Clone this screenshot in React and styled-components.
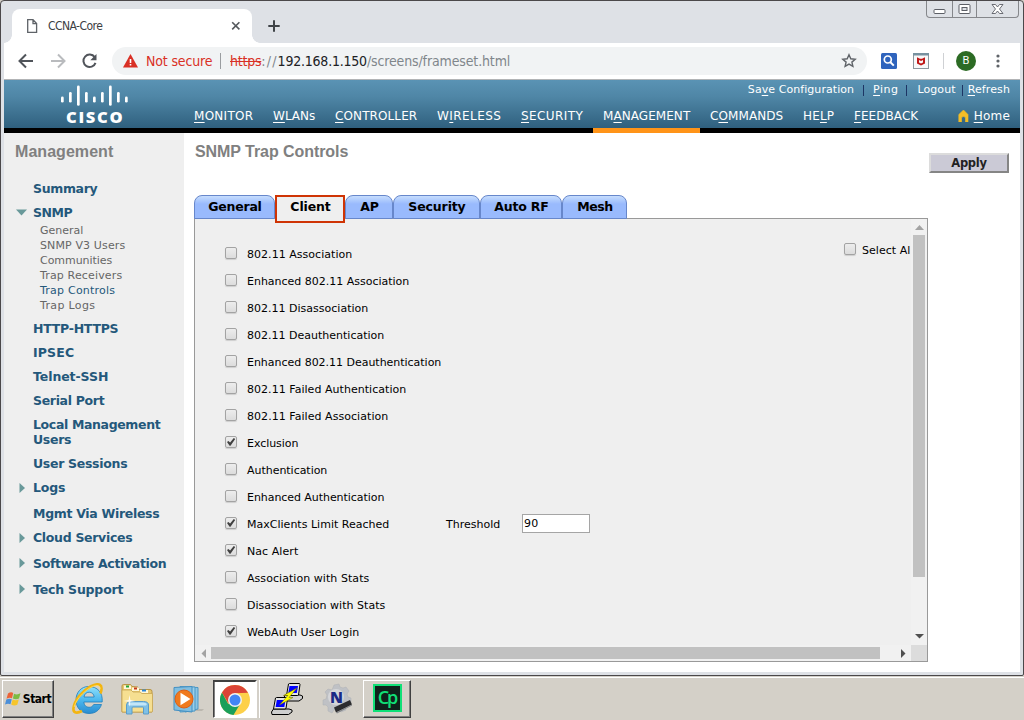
import React, { useLayoutEffect, useRef, useState } from 'react';
import styled, { createGlobalStyle, css } from 'styled-components';

const verdana = '"DejaVu Sans", Verdana, sans-serif';
const tahoma = '"DejaVu Sans Condensed", "DejaVu Sans", Tahoma, sans-serif';

const Global = createGlobalStyle`
  *, *::before, *::after { box-sizing: border-box; }
  body { margin: 0; width: 1024px; height: 720px; overflow: hidden; background: #d4d0c8; font-family: ${verdana}; }
  u { text-underline-offset: 2px; text-decoration-thickness: 1px; }
  svg { display: block; flex: none; }
`;

/* Text tracked so that it fills a set width. */
const Tracked = styled.span`
  display: inline-block;
  flex: none;
  white-space: pre;
`;
function Fit({ w, children }) {
  const ref = useRef(null);
  const [spacing, setSpacing] = useState(0);
  useLayoutEffect(() => {
    const el = ref.current;
    const natural = el.getBoundingClientRect().width;
    setSpacing((w + 0.3 - natural) / el.textContent.length);
  }, [w]);
  return <Tracked ref={ref} style={{ letterSpacing: `${spacing}px` }}>{children}</Tracked>;
}

const Screen = styled.div`
  width: 1024px; height: 720px;
  display: flex; flex-direction: column;
`;
const Window = styled.div`
  height: 676px;
  flex: none;
  display: flex; flex-direction: column;
  background: #dee1e6;
  border: 1px solid #4b484a;
  border-radius: 4px 4px 2px 2px;
  padding: 0 3px 3px;
`;

/* ---- browser chrome ---- */
const TabStrip = styled.div`
  display: flex;
  height: 42px;
  flex: none;
  padding-left: 8px;
`;
const BrowserTab = styled.div`
  position: relative;
  display: flex; align-items: center;
  width: 240px; height: 34px;
  margin-top: 8px;
  padding: 0 11px 0 14px;
  background: #fff;
  border-radius: 8px 8px 0 0;
  font: 12px/16px ${tahoma};
  color: #3c4043;
  &::before, &::after {
    content: ''; position: absolute; bottom: 0; width: 8px; height: 8px;
  }
  &::before { left: -8px; background: radial-gradient(circle at 0 0, transparent 7.5px, #fff 8px); }
  &::after { right: -8px; background: radial-gradient(circle at 100% 0, transparent 7.5px, #fff 8px); }
`;
const TabTitle = styled.div`flex: 1; padding-left: 9px;`;
const NewTab = styled.div`padding: 19px 0 0 16px;`;
const WindowButtons = styled.div`
  display: flex;
  width: 93px; height: 17px;
  margin: 0 1px 0 auto;
  border: 1px solid #85878b; border-top: 0;
  border-radius: 0 0 4px 4px;
`;
const WindowButton = styled.div`
  display: flex; justify-content: center; align-items: center;
  width: ${p => p.$w}px;
  & + & { border-left: 1px solid #85878b; }
`;
const Toolbar = styled.div`
  display: flex; align-items: center;
  height: 37px; flex: none;
  padding: 0 20px 1px 13px;
  background: #fff;
  border-bottom: 1px solid #b2b4b6;
`;
const NavButtons = styled.div`display: flex; align-items: center; gap: 14px; width: 95px; flex: none;`;
const Omnibox = styled.div`
  display: flex; align-items: center;
  flex: none;
  width: 755px; height: 28px;
  padding: 0 10px 0 11px;
  border-radius: 14px;
  background: #f1f3f4;
  font: 14px/20px ${tahoma};
  color: #80868b;
`;
const NotSecure = styled.div`display: flex; align-items: center; gap: 8px; color: #d93025; width: 97px;`;
const Divider = styled.div`width: 1px; height: 16px; background: ${p => p.$c}; margin: 0 ${p => p.$r}px 0 ${p => p.$l || 0}px;`;
const Scheme = styled.span`color: #d93025; text-decoration: line-through; text-decoration-thickness: 1px;`;
const Host = styled.span`color: #202124;`;
const Spacer = styled.div`flex: 1;`;
const Extensions = styled.div`display: flex; align-items: center; flex: 1; padding-left: 14px;`;
const McAfee = styled.div`padding-left: 16px;`;
const Avatar = styled.div`
  width: 20px; height: 20px; border-radius: 50%; flex: none;
  background: #2c6b24; color: #fff;
  font: 11px/20px Roboto, sans-serif; text-align: center;
  margin-right: auto;
`;

/* ---- product header ---- */
const Header = styled.header`
  display: flex;
  height: 53px; flex: none;
  background: linear-gradient(#5a93b4, #4f86a6 35%, #2f607e) 0 0 / 100% 48px no-repeat #000;
  color: #fff;
`;
const Logo = styled.div`
  width: 190px; padding: 5px 0 0 57px;
  font: 800 16.5px/20px "Open Sans", sans-serif;
`;
const LogoName = styled.div`padding-left: 5px;`;
const HeaderMain = styled.div`flex: 1; display: flex; flex-direction: column;`;
const Utilities = styled.div`
  display: flex; justify-content: flex-end; align-items: center;
  height: 20px; flex: none; padding-right: 10px;
  font-size: 11px; line-height: 14px;
`;
const Bar = styled.span`width: 1px; height: 11px; margin: 0 ${p => p.$r}px 0 ${p => p.$l}px; background: #1d3564;`;
const MainNav = styled.nav`
  display: flex; flex: none;
  height: 33px;
  font-size: 12px; line-height: 33px;
`;
const NavItem = styled.div`
  width: ${p => p.$w}px; height: 33px;
  flex: none;
  ${p => p.$active && css`
    border-bottom: 5px solid #ff9418;
    padding-left: 10px;
    margin-left: -10px; margin-right: 10px;
  `}
`;
const Home = styled.div`display: flex; align-items: center; gap: 5px; height: 33px; margin-left: auto; padding-right: 10px;
  svg { margin-bottom: 2px; }
`;

/* ---- page ---- */
const Page = styled.div`display: flex; flex: 1; min-height: 0; background: #fff;`;
const Sidebar = styled.aside`width: 180px; flex: none; background: #efefef; color: #24587b;`;
const Title = styled.h1`
  margin: 0;
  font: bold 16px/38px "Liberation Sans", Arial, sans-serif;
  color: #808080;
`;
const SideTitle = styled(Title)`padding-left: 11px; margin-bottom: 5px;`;
const MenuItem = styled.div`
  display: flex; align-items: center;
  height: ${p => p.$h || 24}px;
  padding-left: 12px;
  font-weight: bold; font-size: 12.5px; line-height: 15px;
`;
const Caret = styled.span`display: flex; width: 17px;`;
const TwoLines = styled.span`display: flex; flex-direction: column; align-items: flex-start;`;
const SubMenu = styled.div`padding: 0 0 3px 36px; margin-top: -1px;`;
const SubItem = styled.div`font-size: 11px; line-height: 15px; color: ${p => (p.$active ? '#24587b' : '#666')};`;

const Main = styled.main`flex: 1; padding-left: 10px;`;
const PageHead = styled.div`display: flex; justify-content: space-between; height: 62px; padding-right: 11px; padding-left: 1px;`;
const Apply = styled.button`
  width: 80px; height: 20px; margin-top: 20px; padding: 0;
  display: flex; align-items: center; justify-content: center;
  background: #cbcad6;
  border: 2px solid; border-color: #dcdcdc #858585 #858585 #dcdcdc;
  font: bold 11.5px/14px ${verdana};
  color: #222;
`;
const Tabs = styled.div`display: flex; height: 23px; position: relative; z-index: 1;`;
const Tab = styled.div`
  display: flex; justify-content: center;
  width: ${p => p.$w}px; height: 24px;
  padding-left: 1px;
  font: bold 12.5px/22px ${verdana};
  color: #000;
  background: linear-gradient(#c6ddfd, #99bafd 8px);
  border: 1px solid #6787cb;
  border-radius: 8px 8px 0 0;
  ${p => p.$active && css`
    height: 28px; line-height: 20px;
    background: #efefef;
    border: 2px solid #cf3405;
    border-radius: 0;
  `}
`;
const Panel = styled.section`
  display: grid;
  grid-template: 426px 16px / 716px 16px;
  width: 734px; height: 444px;
  border: 1px solid #999;
  background: #efefef;
  color: #000;
  font-size: 11px; line-height: 14px;
`;
const Content = styled.div`display: flex; justify-content: space-between; padding: 21px 0 0 30px; overflow: hidden;`;
const Options = styled.div``;
const Option = styled.label`display: flex; align-items: center; height: 27px; padding-top: 3px;`;
const OptionName = styled.span`width: 199px;`;
const Threshold = styled.span`width: 76px;`;
const NumberBox = styled.span`
  display: flex; align-items: center;
  width: 68px; height: 19px; padding: 1px 0 0 1px; margin-top: -3px;
  background: #fff; border: 1px solid #a5a5a5;
`;
const Box = styled.span`
  display: flex; align-items: center; justify-content: center;
  width: 12px; height: 12px; flex: none; margin: -4px ${p => p.$gap}px 0 0;
  border: 1px solid #a3a3a3; border-radius: 2px;
  background: linear-gradient(#ededed, #dcdcdc);
  box-shadow: 0 1px 1px rgba(0,0,0,.14);
`;
const SelectAll = styled.label`display: flex; align-items: center; height: 22px; width: 67px;`;
const ScrollY = styled.div`
  display: flex; flex-direction: column; align-items: center;
  background: #f1f1f1; padding-bottom: 6px;
`;
const ThumbY = styled.div`width: 12px; height: 342px; margin-bottom: auto; background: #c1c1c1;`;
const ScrollX = styled.div`display: flex; align-items: center; background: #f1f1f1; padding: 0 5px 0 6px;`;
const ThumbX = styled.div`width: 669px; height: 12px; margin: 0 auto 0 5px; background: #c1c1c1;`;
const ArrowSlot = styled.div`height: 16px; padding-top: 6px;`;
const Corner = styled.div`background: #dcdcdc;`;

/* ---- taskbar ---- */
const Taskbar = styled.div`
  display: flex; align-items: flex-start;
  height: 44px; padding: 3px 0 0 2px;
  background: #d4d0c8;
  border-top: 1px solid #d4d0c8;
  box-shadow: inset 0 1px #fff;
`;
const Raised = styled.div`
  display: flex; align-items: center; justify-content: center; gap: 2px;
  flex: none;
  width: ${p => p.$w}px; height: 38px;
  border: 1px solid; border-color: #fff #404040 #404040 #fff;
  box-shadow: inset -1px -1px #808080;
  font: bold 12px/14px ${tahoma};
  color: #000;
`;
const Pressed = styled(Raised)`
  background: #fff;
  border-color: #404040 #fff #fff #404040;
  border-width: 2px 2px 1px 1px;
  box-shadow: inset 1px 0 #808080, 2px 0 #d4d0c8, 3px 0 #fff;
`;
const Launch = styled.div`
  display: flex; align-items: center;
  flex: none;
  width: ${p => p.$w}px; height: 38px;
  padding-left: ${p => p.$x}px;
`;

const PageIcon = () => (
  <svg width="13" height="16" viewBox="0 0 13 16" fill="none" stroke="#5f6368" strokeWidth="1.3"><path d="M1.7 1.7H7l3.6 3.8v8.8H1.7zM7 1.7v4h3.6" /></svg>
);
const CloseIcon = () => (
  <svg width="10" height="10" viewBox="0 0 10 10" stroke="#54585c" strokeWidth="1.6"><path d="M1.2 1.2l7.2 7.2M8.4 1.2L1.2 8.4" /></svg>
);
const Check = () => (
  <svg width="10" height="10" viewBox="0 0 10 10"><path d="M1 5.1l1.4-1.2 1.7 1.7L7.8 1 9.2 2 4.5 8.8h-.9z" fill="#404040" /></svg>
);
const CaretDown = () => <svg width="11" height="7" viewBox="0 0 11 7"><path d="M0 0.5h11L5.5 6.5z" fill="#69999a" /></svg>;
const CaretRight = () => <svg width="13" height="10" viewBox="0 0 13 10"><path d="M3.500 0v10l5.500-5z" fill="#69999a" /></svg>;

const OptionRow = ({ label, w, on, children }) => (
  <Option><Box $gap={10}>{on && <Check />}</Box><OptionName><Fit w={w}>{label}</Fit></OptionName>{children}</Option>
);

const options = [
  ['802.11 Association', 105], ['Enhanced 802.11 Association', 162], ['802.11 Disassociation', 121],
  ['802.11 Deauthentication', 137], ['Enhanced 802.11 Deauthentication', 194],
  ['802.11 Failed Authentication', 159], ['802.11 Failed Association', 141], ['Exclusion', 51, true],
  ['Authentication', 80], ['Enhanced Authentication', 137], ['MaxClients Limit Reached', 142, true],
  ['Nac Alert', 51, true], ['Association with Stats', 122], ['Disassociation with Stats', 138],
  ['WebAuth User Login', 112, true],
];
const subItems = [['General', 43], ['SNMP V3 Users', 85], ['Communities', 72], ['Trap Receivers', 82], ['Trap Controls', 75, true], ['Trap Logs', 55]];
const lowerMenu = [['HTTP-HTTPS', 85], ['IPSEC', 41], ['Telnet-SSH', 75], ['Serial Port', 71]];
const nav = [
  ['', 'M', 'ONITOR', 59, 79], ['', 'W', 'LANs', 42, 62], ['', 'C', 'ONTROLLER', 82, 102], ['W', 'I', 'RELESS', 64, 84],
  ['', 'S', 'ECURITY', 62, 82], ['M', 'A', 'NAGEMENT', 87, 107, true], ['C', 'O', 'MMANDS', 73, 93], ['HE', 'L', 'P', 31, 51],
  ['', 'F', 'EEDBACK', 64, 84],
];
const tabs = [['General', 81, 53], ['Client', 70, 40, true], ['AP', 48, 18], ['Security', 87, 57], ['Auto RF', 82, 54], ['Mesh', 65, 35]];
const bars = [[96.5, 102.5], [92, 102.5], [85.5, 105.8], [92, 102.5], [96.5, 102.5], [92, 102.5], [85.5, 105.8], [92, 102.5], [96.5, 102.5]];

const StartFlag = () => (
  <svg width="16" height="16" viewBox="0 0 16 16">
    <path d="M3 2.5Q6 .3 8.2 2L7 7.2Q4.600 6 1.500 7.800z" fill="#ec6338" />
    <path d="M9 2.700Q12 4.300 15.500 2.300L14 7.500Q11 9 7.900 7.500z" fill="#7dbb42" />
    <path d="M1.300 8.600Q4.300 6.900 6.800 8.300L5.500 13.300Q3 12 0 13.500z" fill="#4c8fd8" />
    <path d="M7.600 8.500Q10.500 10 13.800 8.500L12.300 13.800Q9 15.300 6.200 13.600z" fill="#f6c52b" />
  </svg>
);
const IEIcon = () => (
  <svg width="32" height="32" viewBox="0 0 32 32">
    <defs><linearGradient id="ie" x1="0" y1="0" x2="0" y2="1"><stop offset="0" stopColor="#8fe0fb" /><stop offset=".5" stopColor="#4db8ee" /><stop offset="1" stopColor="#2a8cd0" /></linearGradient></defs>
    <path d="M16.500 3.500C9 3.500 4 9.500 4 17c0 8 5.500 13.500 13 13.500 6 0 10.500-3 12.500-9h-7.800c-1 2-2.600 2.800-4.700 2.800-3 0-5-2-5.200-5.300h18.400C31 9.500 25.500 3.500 16.500 3.500zM12 14c.4-3 2.300-4.800 5.200-4.800 2.800 0 4.600 1.800 5 4.800z" fill="url(#ie)" stroke="#1f7dbd" strokeWidth=".8" fillRule="evenodd" />
    <path d="M28.500 10.500C32 .5 26-.5 18.500 3.500 10 8 2.500 17.500 1.500 25c-.7 5.500 4 5.500 8.500 3" fill="none" stroke="#f3b510" strokeWidth="2.600" />
    <path d="M28 6C28.500 1 23 2.200 18.500 4.500 11 9 3.500 17.500 2.200 24" fill="none" stroke="#ffe06a" strokeWidth=".8" />
  </svg>
);
const FolderIcon = () => (
  <svg width="34" height="32" viewBox="0 0 34 32">
    <path d="M2 6V3q0-1.500 1.500-1.500h7l1.500 2 6 .5 1 2.500h11q2 0 2 2V29H2z" fill="#e8c76d" stroke="#b99545" />
    <path d="M4 2.500h7V6H4zM12 4.500h7V8h-7zM20 7h8v3h-8z" fill="#fff7d9" />
    <path d="M2 7h9l2 2h7l2 1.500h10.500V28q0 1-1 1H3q-1 0-1-1z" fill="#f6df91" stroke="#c8a655" strokeWidth=".8" />
    <path d="M6 2.500h3v2H6z" fill="#22a535" /><path d="M14 4.500h3v2h-3z" fill="#c63b1f" /><path d="M22 6.500h4v2h-4z" fill="#2b86d9" />
    <path d="M6.500 31V22q0-3.500 4-3.500h13q5 0 5 3.500v9h-5v-6q0-1-1-1h-9.500q-1 0-1 1v6z" fill="#7fc0e6" stroke="#5a9cc9" />
    <path d="M8 21q1-1.500 4-1.500h11q3 0 4 1.500l-1 1.500H9z" fill="#c3e6f8" />
    <path d="M9.500 12l.9 5 5 .9-5 .9-.9 5-.9-5-5-.9 5-.9z" fill="#fff" opacity=".85" />
  </svg>
);
const MediaIcon = () => (
  <svg width="32" height="30" viewBox="0 0 32 30">
    <path d="M9 27h20l2-2H12z" fill="#aaa69f" opacity=".6" />
    <path d="M12 3l13 .5V25l-13 3z" fill="#8cc5e4" stroke="#4b97c4" />
    <path d="M7 2.500l15 .5v24l-15 1z" fill="#9bcfe9" stroke="#4b97c4" />
    <path d="M1 3.500l18-1v25.500l-18-2z" fill="#80bee0" stroke="#4490c2" />
    <circle cx="11" cy="15" r="9" fill="#f07a1e" stroke="#da5e16" />
    <path d="M7.500 8.800v12.400L17.500 15z" fill="#fff" />
  </svg>
);
const ChromeIcon = () => (
  <svg width="30" height="30" viewBox="0 0 30 30">
    <circle cx="15" cy="15" r="15" fill="#fdd049" />
    <path d="M15 15L8.200 19 2 7.500A15 15 0 0 0 13.500 30l6-10z" fill="#1a9f5a" />
    <path d="M2 7.500A15 15 0 0 1 28 7.700L15 8.300 8.500 18.500z" fill="#db4437" />
    <circle cx="15" cy="15" r="7" fill="#f1f1f1" /><circle cx="15" cy="15" r="5.500" fill="#4285f4" />
  </svg>
);
const PuttyIcon = () => (
  <svg width="32" height="32" viewBox="0 0 32 32">
    <path d="M14 12h15l2.500 1v2.500L28 18H14l-1.500-2z" fill="#cfcfcf" stroke="#000" />
    <path d="M17.500 1l1-.5h10l.5 1-1.500 10.500-1 .5H15.500z" fill="#e2e2e2" stroke="#000" />
    <path d="M18.500 3h8.500l-1.200 7H17.300z" fill="#00f" />
    <path d="M2.500 26H18l3 1v2l-3.500 2.500H1L.5 29z" fill="#cfcfcf" stroke="#000" />
    <path d="M4.500 15l1-.5h10.500l.5 1-1.500 10-1 .5H2.500z" fill="#e2e2e2" stroke="#000" />
    <path d="M5.800 17h8.700l-1.200 7H4.600z" fill="#00f" />
    <path d="M26 5L12.500 12.500h4.300L8.500 22l13.500-7.500h-4z" fill="#ff0" stroke="#6a6700" strokeWidth=".5" />
  </svg>
);
const NIcon = () => (
  <svg width="32" height="32" viewBox="0 0 32 32">
    <path d="M12 2l5-1 1 3 3 1 3-1 3 4-2 3 1 3 3 1v5l-4 1-2 3 1 3-5 2-3-3-4 1-2 3-4-2v-4l-2-2H1v-5l3-1 1-4-2-3 3-3 4 1z" fill="#bfc1c5" stroke="#aeb0b4" strokeWidth=".5" />
    <circle cx="14" cy="14" r="8" fill="#d5d6d9" />
    <text x="8" y="19.500" fontFamily="Open Sans, sans-serif" fontWeight="800" fontSize="15.500" fill="#1b2a86">N</text>
    <path d="M12 24.500L28 17l2 4.500-16 8z" fill="#2c2c2e" /><path d="M14 29.500l16-8v1l-15 8z" fill="#85878a" />
  </svg>
);
const CpTile = styled.div`
  width: 29px; height: 28px; border: 2px solid #10e077; background: #10221c;
  color: #10e077; font: 600 18px/22px "Open Sans", sans-serif; text-align: center; margin-top: -2px;
`;

export default function App() {
  return (
    <Screen>
      <Global />
      <Window>
        <TabStrip>
          <BrowserTab><PageIcon /><TabTitle><Fit w={54}>CCNA-Core</Fit></TabTitle><CloseIcon /></BrowserTab>
          <NewTab><svg width="12" height="12" viewBox="0 0 12 12" stroke="#3f4347" strokeWidth="2"><path d="M6 .3v11.400M.3 6h11.400" /></svg></NewTab>
          <WindowButtons>
            <WindowButton $w={25}><svg width="13" height="17" viewBox="0 0 13 17"><rect x="1" y="8.500" width="11" height="4" rx="1" fill="#fff" stroke="#5c5f66" /></svg></WindowButton>
            <WindowButton $w={25}><svg width="13" height="17" viewBox="0 0 13 17"><rect x="1" y="3.500" width="11" height="9" rx="1" fill="#fff" stroke="#5c5f66" /><rect x="4" y="6.500" width="5" height="3" fill="#dee1e6" stroke="#5c5f66" /></svg></WindowButton>
            <WindowButton $w={42}><svg width="13" height="17" viewBox="0 0 13 17"><path d="M1 3.500h3.500l2 2.500 2-2.500H12L8.500 8 12 12.500H8.500l-2-2.500-2 2.500H1L4.500 8z" fill="#fff" stroke="#5c5f66" strokeWidth=".9" /></svg></WindowButton>
          </WindowButtons>
        </TabStrip>
        <Toolbar>
          <NavButtons>
            <svg width="18" height="16" viewBox="0 0 18 16" fill="none" stroke="#50545a" strokeWidth="2"><path d="M16 8H3M9 1.500L2.500 8 9 14.500" /></svg>
            <svg width="18" height="16" viewBox="0 0 18 16" fill="none" stroke="#b9bbbe" strokeWidth="2"><path d="M2 8h13M9 1.500L15.500 8 9 14.500" /></svg>
            <svg width="16" height="16" viewBox="0 0 16 16" fill="none" stroke="#50545a" strokeWidth="2"><path d="M13.700 4.200A6.200 6.200 0 1 0 14.500 9.800" /><path d="M15.500 1v6.200H9.300z" fill="#50545a" stroke="none" /></svg>
          </NavButtons>
          <Omnibox>
            <NotSecure>
              <svg width="15" height="14" viewBox="0 0 15 14"><path d="M7.500 0L15 13.500H0z" fill="#d93025" /><path d="M6.700 5h1.600v4H6.700zM6.700 10h1.600v1.600H6.700z" fill="#fff" /></svg>
              <Fit w={66}>Not secure</Fit>
            </NotSecure>
            <Divider $c="#9a9da0" $r={9} />
            <Fit w={31}><Scheme>https</Scheme></Fit><Fit w={16}>://</Fit><Host><Fit w={89}>192.168.1.150</Fit></Host><Fit w={143}>/screens/frameset.html</Fit>
            <Spacer />
            <svg width="16" height="16" viewBox="0 0 16 16" fill="none" stroke="#5f6368" strokeWidth="1.400"><path d="M8 1.800l1.800 4 4.400.4-3.300 2.900 1 4.300L8 11.100l-3.900 2.300 1-4.300-3.300-2.900 4.400-.4z" /></svg>
          </Omnibox>
          <Extensions>
            <svg width="16" height="16" viewBox="0 0 16 16"><rect width="16" height="16" rx="1.500" fill="#2f64bd" /><circle cx="6.800" cy="6.500" r="3.500" fill="none" stroke="#fff" strokeWidth="1.700" /><path d="M9.200 9l3.600 3.600" stroke="#fff" strokeWidth="2" /></svg>
            <McAfee><svg width="16" height="16" viewBox="0 0 16 16"><rect x=".5" y=".5" width="15" height="15" fill="#f7f8f9" stroke="#8d979e" /><path d="M0 0h16v2.500H0z" fill="#77919f" /><path d="M4 4.300l3 1.400h2l3-1.400v6.200L8 12.500l-4-2zM6 7v2.500l2 1 2-1V7L8 8z" fill="#c01818" fillRule="evenodd" /></svg></McAfee>
            <Divider $c="#cfd1d4" $l={14} $r={12} />
            <Avatar>B</Avatar>
            <svg width="4" height="14" viewBox="0 0 4 14" fill="#5f6368"><circle cx="2" cy="2" r="1.600" /><circle cx="2" cy="7" r="1.600" /><circle cx="2" cy="12" r="1.600" /></svg>
          </Extensions>
        </Toolbar>
        <Header>
          <Logo>
            <svg width="70" height="22" viewBox="61 85 70 22" fill="#fff">{bars.map(([a, b], i) => <rect key={i} x={61 + i * 8} y={a} width="2.700" height={b - a} rx="1.300" />)}</svg>
            <LogoName><Fit w={58}>CISCO</Fit></LogoName>
          </Logo>
          <HeaderMain>
            <Utilities>
              <Fit w={106}>Sa<u>v</u>e Configuration</Fit><Bar $l={9} $r={9} /><Fit w={25}><u>P</u>ing</Fit><Bar $l={8} $r={10} /><Fit w={38}>Logout</Fit><Bar $l={6} $r={5} /><Fit w={42}><u>R</u>efresh</Fit>
            </Utilities>
            <MainNav>
              {nav.map(([a, b, c, w, full, active]) => <NavItem key={c} $w={full} $active={active}><Fit w={w}>{a}<u>{b}</u>{c}</Fit></NavItem>)}
              <Home>
                <svg width="11" height="12" viewBox="0 0 11 12"><path d="M5.500 0L10 4.500V12H7.500V7.500q-2-2-4 0V12H.8V4.500z" fill="#f4bd26" stroke="#f4bd26" strokeLinejoin="round" strokeWidth=".6" /></svg>
                <Fit w={36}><u>H</u>ome</Fit>
              </Home>
            </MainNav>
          </HeaderMain>
        </Header>
        <Page>
          <Sidebar>
            <SideTitle><Fit w={98}>Management</Fit></SideTitle>
            <MenuItem><Caret /><Fit w={64}>Summary</Fit></MenuItem>
            <MenuItem><Caret><CaretDown /></Caret><Fit w={39}>SNMP</Fit></MenuItem>
            <SubMenu>{subItems.map(([t, w, a]) => <SubItem key={t} $active={a}><Fit w={w}>{t}</Fit></SubItem>)}</SubMenu>
            {lowerMenu.map(([t, w]) => <MenuItem key={t}><Caret /><Fit w={w}>{t}</Fit></MenuItem>)}
            <MenuItem $h={39}><Caret /><TwoLines><Fit w={127}>Local Management</Fit><Fit w={38}>Users</Fit></TwoLines></MenuItem>
            <MenuItem><Caret /><Fit w={94}>User Sessions</Fit></MenuItem>
            <MenuItem $h={25}><Caret><CaretRight /></Caret><Fit w={32}>Logs</Fit></MenuItem>
            <MenuItem $h={26}><Caret /><Fit w={126}>Mgmt Via Wireless</Fit></MenuItem>
            <MenuItem $h={23}><Caret><CaretRight /></Caret><Fit w={99}>Cloud Services</Fit></MenuItem>
            <MenuItem $h={28}><Caret><CaretRight /></Caret><Fit w={133}>Software Activation</Fit></MenuItem>
            <MenuItem $h={24}><Caret><CaretRight /></Caret><Fit w={90}>Tech Support</Fit></MenuItem>
          </Sidebar>
          <Main>
            <PageHead>
              <Title><Fit w={153}>SNMP Trap Controls</Fit></Title>
              <Apply><Fit w={35}>Apply</Fit></Apply>
            </PageHead>
            <Tabs>{tabs.map(([t, w, tw, a]) => <Tab key={t} $w={w} $active={a}><Fit w={tw}>{t}</Fit></Tab>)}</Tabs>
            <Panel>
              <Content>
                <Options>
                  {options.map(([t, w, on]) => (
                    <OptionRow key={t} label={t} w={w} on={on}>
                      {t.startsWith('MaxClients') && <><Threshold><Fit w={54}>Threshold</Fit></Threshold><NumberBox><Fit w={14}>90</Fit></NumberBox></>}
                    </OptionRow>
                  ))}
                </Options>
                <SelectAll><Box $gap={6} /><Fit w={48}>Select Al</Fit></SelectAll>
              </Content>
              <ScrollY>
                <ArrowSlot><svg width="9" height="5" viewBox="0 0 9 5"><path d="M4.500 0L9 5H0z" fill="#a3a3a3" /></svg></ArrowSlot>
                <ThumbY />
                <svg width="9" height="5" viewBox="0 0 9 5"><path d="M0 0h9L4.500 4.500z" fill="#505050" /></svg>
              </ScrollY>
              <ScrollX>
                <svg width="5" height="9" viewBox="0 0 5 9"><path d="M5 0v9L.5 4.500z" fill="#a3a3a3" /></svg>
                <ThumbX />
                <svg width="5" height="9" viewBox="0 0 5 9"><path d="M0 0v9l4.500-4.500z" fill="#505050" /></svg>
              </ScrollX>
              <Corner />
            </Panel>
          </Main>
        </Page>
      </Window>
      <Taskbar>
        <Raised $w={52}><StartFlag /><Fit w={28}>Start</Fit></Raised>
        <Launch $w={66} $x={18}><IEIcon /></Launch>
        <Launch $w={51} $x={0}><FolderIcon /></Launch>
        <Launch $w={42} $x={2}><MediaIcon /></Launch>
        <Pressed $w={44}><ChromeIcon /></Pressed>
        <Launch $w={64} $x={14}><PuttyIcon /></Launch>
        <Launch $w={42} $x={1}><NIcon /></Launch>
        <Raised $w={48}><CpTile><Fit w={18}>Cp</Fit></CpTile></Raised>
      </Taskbar>
    </Screen>
  );
}
